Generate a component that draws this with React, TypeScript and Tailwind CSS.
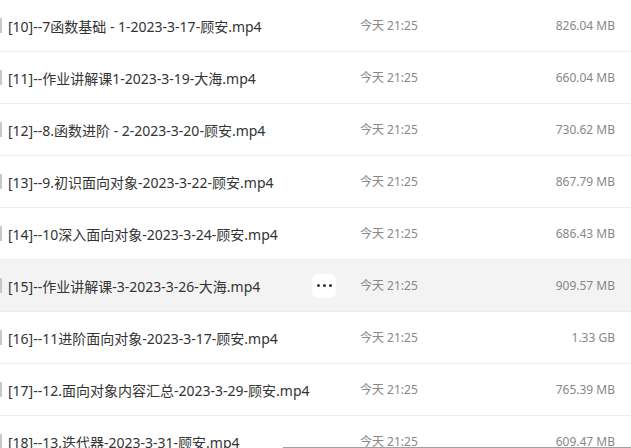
import React from "react";

const rows = [
  { name: "[10]--7函数基础 - 1-2023-3-17-顾安.mp4", size: "826.04 MB" },
  { name: "[11]--作业讲解课1-2023-3-19-大海.mp4", size: "660.04 MB" },
  { name: "[12]--8.函数进阶 - 2-2023-3-20-顾安.mp4", size: "730.62 MB" },
  { name: "[13]--9.初识面向对象-2023-3-22-顾安.mp4", size: "867.79 MB" },
  { name: "[14]--10深入面向对象-2023-3-24-顾安.mp4", size: "686.43 MB" },
  { name: "[15]--作业讲解课-3-2023-3-26-大海.mp4", size: "909.57 MB", hover: true },
  { name: "[16]--11进阶面向对象-2023-3-17-顾安.mp4", size: "1.33 GB" },
  { name: "[17]--12.面向对象内容汇总-2023-3-29-顾安.mp4", size: "765.39 MB" },
  { name: "[18]--13.迭代器-2023-3-31-顾安.mp4", size: "609.47 MB" },
];

export default function App() {
  return (
    <div
      className="relative h-[448px] w-[631px] overflow-hidden bg-white text-[14px]"
      style={{ fontFamily: '"Noto Sans", "Noto Sans CJK SC", sans-serif' }}
    >
      {rows.map((r) => (
        <div
          key={r.name}
          className={`flex h-[52px] shrink-0 items-center border-b border-[#ededed] ${r.hover ? "bg-[#f3f3f3]" : "bg-white"}`}
        >
          <div className="h-[15px] w-[2px] bg-[#c8c8c8]" />
          <div className="w-[310px] pl-[6px] pt-[2px] text-[#333]">{r.name}</div>
          <div className="flex w-[48px] items-center">
            {r.hover && (
              <div className="flex h-[24px] w-[24px] items-center justify-center gap-[3px] rounded-[6px] bg-white">
                <span className="h-[3px] w-[3px] rounded-full bg-[#333]" />
                <span className="h-[3px] w-[3px] rounded-full bg-[#333]" />
                <span className="h-[3px] w-[3px] rounded-full bg-[#333]" />
              </div>
            )}
          </div>
          <div className="w-[150px] text-[12px] text-[#888]">今天 21:25</div>
          <div className="w-[105px] text-right text-[12px] text-[#888]">{r.size}</div>
        </div>
      ))}
      <div className="absolute bottom-0 left-[283px] h-px w-[348px] bg-[#a0a0a0]" />
    </div>
  );
}
